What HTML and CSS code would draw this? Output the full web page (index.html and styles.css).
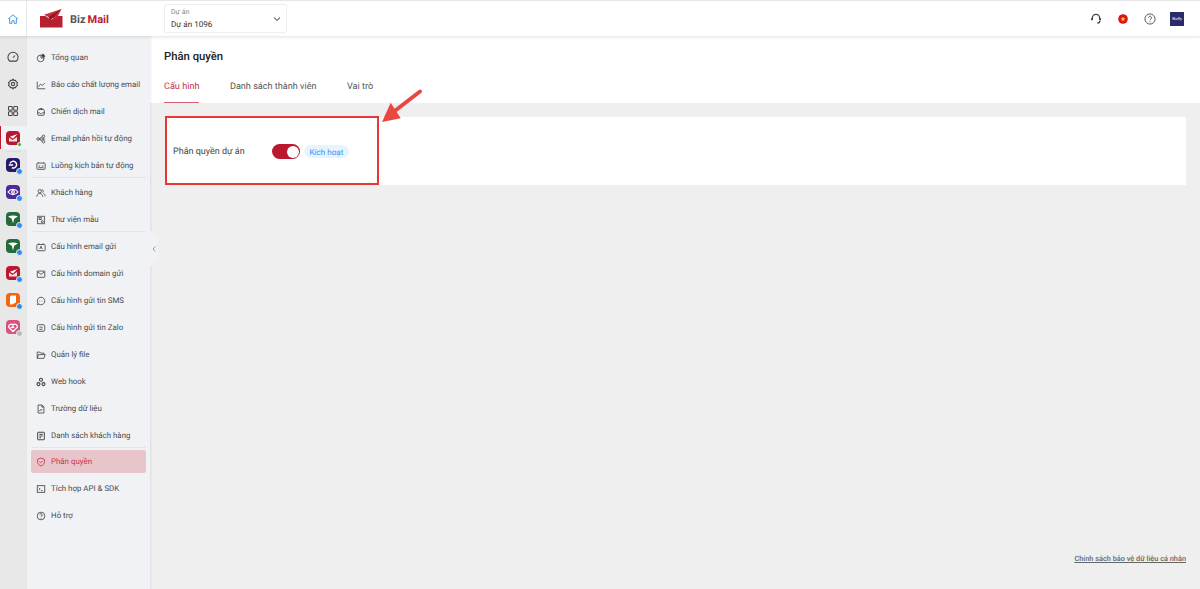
FILE: index.html
```html
<!DOCTYPE html>
<html lang="en">
<head>
  <meta charset="UTF-8">
  <meta name="viewport" content="width=device-width, initial-scale=1.0">
  <title>Phân quyền</title>
  <link rel="stylesheet" href="styles.css">
</head>
<body>

<!-- Top bar -->
<header class="topbar">
  <div class="home-cell">
    <svg class="ico-sm" viewBox="0 0 16 16" fill="none" stroke="#3f9bf0" stroke-width="1.300"><path d="M1.500 8 8 2.500 14.500 8M3.500 6.800v7h3v-3.500h3v3.500h3v-7"/></svg>
  </div>
  <div class="logo">
    <svg class="logo-mark" viewBox="0 0 23 19">
      <path d="M0 7h5.500l5.500 4 6-4h5.500v11.500H0z" fill="#b8202f"/>
      <path d="M21.500 0 4 5.800l4.500 2.300 2 3.200 1.800-2.300 3.700 1.700z" fill="#c92c3a"/>
      <path d="M21.500 0 8.500 8.100l2 3.200z" fill="#8e1622"/>
    </svg>
    <span class="logo-biz">Biz</span><span class="logo-mail">Mail</span>
  </div>
  <div class="project-select">
    <div class="project-text">
      <div class="project-label">Dự án</div>
      <div class="project-value">Dự án 1096</div>
    </div>
    <svg class="chevron" viewBox="0 0 10 10" fill="none" stroke="#777" stroke-width="1.100"><path d="M2 3.500 5 6.500 8 3.500"/></svg>
  </div>
  <div class="top-actions">
    <svg class="ico" viewBox="0 0 16 16" fill="none" stroke="#444" stroke-width="1.500"><path d="M3.800 9V7a4.200 4.200 0 0 1 8.400 0v2"/><path d="M3 7v2.500M13 7v2.500M12.500 10c0 1.800-1.200 2.700-3 2.800"/></svg>
    <svg class="ico" viewBox="0 0 16 16"><circle cx="8" cy="8" r="5.500" fill="#e0101f"/><path d="m8 5.200.8 2h2l-1.600 1.300.6 2L8 9.300l-1.800 1.200.6-2-1.600-1.300h2z" fill="#fbd914"/></svg>
    <svg class="ico" viewBox="0 0 16 16" fill="none" stroke="#555" stroke-width="1.100"><circle cx="8" cy="8" r="5.800"/><path d="M6.300 6.500a1.700 1.700 0 1 1 2.600 1.500c-.6.400-.9.700-.9 1.400M8 10.600v1.100"/></svg>
    <div class="avatar">Bizfly</div>
  </div>
</header>

<div class="layout">
  <!-- App rail -->
  <nav class="rail">
    <div class="rail-item">
      <svg class="ico-sm" viewBox="0 0 16 16" fill="none" stroke="#444" stroke-width="1.400"><path d="M3.500 13.500a6.800 6.800 0 1 1 9 0z"/><path d="M8 9l2.500-3"/></svg>
    </div>
    <div class="rail-item">
      <svg class="ico-sm" viewBox="0 0 16 16" fill="none" stroke="#444" stroke-width="1.400"><path d="M8 1.500l1.300 1.700 2.200-.2.600 2 1.900 1.100-.8 1.900.8 1.900-1.900 1.100-.6 2-2.200-.2L8 14.500l-1.300-1.700-2.200.2-.6-2-1.900-1.100.8-1.900-.8-1.900 1.900-1.100.6-2 2.200.2z"/><circle cx="8" cy="8" r="2.200"/></svg>
    </div>
    <div class="rail-item">
      <svg class="ico-sm" viewBox="0 0 16 16" fill="none" stroke="#444" stroke-width="1.400"><rect x="2" y="2" width="5" height="5" rx="1"/><rect x="9" y="2" width="5" height="5" rx="1"/><rect x="2" y="9" width="5" height="5" rx="1"/><rect x="9" y="9" width="5" height="5" rx="1"/></svg>
    </div>
    <div class="rail-item rail-active">
      <span class="app-icon app-red">
        <svg viewBox="0 0 14 14"><path d="M3 6.500 6.500 9 11 6v4.500H3z" fill="#f6dfe2"/><path d="M11.500 3 4 5.800l3 1.600z" fill="#fff"/></svg>
        <i class="dot dot-green"></i>
      </span>
    </div>
    <div class="rail-sep"></div>
    <div class="rail-item">
      <span class="app-icon app-navy">
        <svg viewBox="0 0 14 14" fill="none" stroke="#fff" stroke-width="1.500"><path d="M4 5.500a3.400 3.400 0 1 1 1.800 4.300M2.800 7h4.400"/></svg>
        <i class="dot"></i>
      </span>
    </div>
    <div class="rail-item">
      <span class="app-icon app-purple">
        <svg viewBox="0 0 14 14" fill="none" stroke="#fff" stroke-width="1.200"><path d="M2 7c2.500-3.500 7.500-3.500 10 0-2.500 3.500-7.500 3.500-10 0z"/><circle cx="7" cy="7" r="1.300"/></svg>
        <i class="dot"></i>
      </span>
    </div>
    <div class="rail-item">
      <span class="app-icon app-green">
        <svg viewBox="0 0 14 14"><path d="M2 4.500c3-1.500 7-1.500 10 0L8.200 6.800 7 11.500 5.800 6.800z" fill="#fff"/></svg>
        <i class="dot"></i>
      </span>
    </div>
    <div class="rail-item">
      <span class="app-icon app-green">
        <svg viewBox="0 0 14 14"><path d="M2 4.500c3-1.500 7-1.500 10 0L8.200 6.800 7 11.500 5.800 6.800z" fill="#fff"/></svg>
        <i class="dot"></i>
      </span>
    </div>
    <div class="rail-item">
      <span class="app-icon app-red">
        <svg viewBox="0 0 14 14"><path d="M3 6.500 6.500 9 11 6v4.500H3z" fill="#f6dfe2"/><path d="M11.500 3 4 5.800l3 1.600z" fill="#fff"/></svg>
        <i class="dot"></i>
      </span>
    </div>
    <div class="rail-item">
      <span class="app-icon app-orange">
        <svg viewBox="0 0 14 14"><path d="M5 2.500h5v7L6 11.500H4V4z" fill="#fff"/></svg>
        <i class="dot"></i>
      </span>
    </div>
    <div class="rail-item">
      <span class="app-icon app-pink">
        <svg viewBox="0 0 14 14" fill="none" stroke="#fff" stroke-width="1.300"><path d="M7 11.500 2.800 7.500a2.500 2.500 0 0 1 4.200-2.500 2.500 2.500 0 0 1 4.200 2.500z"/><path d="M4.500 7.500h1.500l1-1 1 1.500"/></svg>
        <i class="dot dot-grey"></i>
      </span>
    </div>
  </nav>

  <!-- Menu -->
  <aside class="sidebar">
    <a class="menu-item">
      <svg class="mi" viewBox="0 0 12 12" fill="none" stroke="#444"><circle cx="5.500" cy="6.500" r="4"/><path d="M6 2.500V6h4" /><path d="M7.500 1.500a3 3 0 0 1 3 3h-3z" fill="#444"/></svg>
      Tổng quan
    </a>
    <a class="menu-item">
      <svg class="mi" viewBox="0 0 12 12" fill="none" stroke="#444"><path d="M1.500 2v8.500h9.500M3 8l2.500-3 2 1.500L10.500 4"/></svg>
      Báo cáo chất lượng email
    </a>
    <a class="menu-item">
      <svg class="mi" viewBox="0 0 12 12" fill="none" stroke="#444"><rect x="2" y="3" width="8" height="7" rx="1.500"/><path d="M2 7h2.500l1 1h1l1-1H10M3.500 3 4.500 1.800h3L8.500 3"/></svg>
      Chiến dịch mail
    </a>
    <a class="menu-item">
      <svg class="mi" viewBox="0 0 12 12" fill="none" stroke="#444"><circle cx="2.500" cy="6" r="1.500"/><circle cx="9" cy="2.800" r="1.500"/><circle cx="9" cy="9.200" r="1.500"/><circle cx="9" cy="6" r="1"/><path d="M4 5.500 7.500 3.300M4 6.500l3.500 2.200M4 6h4"/></svg>
      Email phản hồi tự động
    </a>
    <a class="menu-item">
      <svg class="mi" viewBox="0 0 12 12" fill="none" stroke="#444"><rect x="1" y="2.500" width="10" height="7.500" rx="1"/><path d="M3 2.500v-1M9 2.500v-1M3 6h2M7 6h2M3 8h6"/></svg>
      Luồng kịch bản tự động
    </a>
    <div class="menu-sep"></div>
    <a class="menu-item">
      <svg class="mi" viewBox="0 0 12 12" fill="none" stroke="#444"><circle cx="4.500" cy="3.800" r="2"/><path d="M1 10.500c0-2.500 1.500-4 3.500-4s3.500 1.500 3.500 4M7 2a2 2 0 0 1 1 3.500M9 6.500c1.300.6 2 2 2 3.500"/></svg>
      Khách hàng
    </a>
    <a class="menu-item">
      <svg class="mi" viewBox="0 0 12 12" fill="none" stroke="#444"><rect x="2" y="1.500" width="8" height="9" /><rect x="3.800" y="3.200" width="2.500" height="2.200"/><circle cx="7.500" cy="8" r="1.200"/></svg>
      Thư viện mẫu
    </a>
    <div class="menu-sep"></div>
    <a class="menu-item">
      <svg class="mi" viewBox="0 0 12 12" fill="none" stroke="#444"><rect x="1" y="3" width="10" height="7.500" rx="1"/><path d="M3.500 3V1.500M8.500 3V1.500M4.500 8.500 6 5l1.500 3.500"/></svg>
      Cấu hình email gửi
    </a>
    <a class="menu-item">
      <svg class="mi" viewBox="0 0 12 12" fill="none" stroke="#444"><rect x="1.500" y="2.500" width="9" height="7.500" rx=".5"/><path d="M1.500 3 6 6.500 10.500 3"/></svg>
      Cấu hình domain gửi
    </a>
    <a class="menu-item">
      <svg class="mi" viewBox="0 0 12 12" fill="none" stroke="#444"><path d="M6 1.500a4.500 4.500 0 1 1-2.500 8.200L1.700 10.500l.6-2A4.500 4.500 0 0 1 6 1.500z"/><path d="M4 6h.5M5.800 6h.5M7.600 6h.5"/></svg>
      Cấu hình gửi tin SMS
    </a>
    <a class="menu-item">
      <svg class="mi" viewBox="0 0 12 12" fill="none" stroke="#444"><rect x="1.500" y="2" width="9" height="8" rx="2"/><path d="M4 5h4M4 7.500h4"/></svg>
      Cấu hình gửi tin Zalo
    </a>
    <a class="menu-item">
      <svg class="mi" viewBox="0 0 12 12" fill="none" stroke="#444"><path d="M1.500 10V2.500h3l1 1.200h4V5.500M1.500 10h8L11 5.500H3z"/></svg>
      Quản lý file
    </a>
    <a class="menu-item">
      <svg class="mi" viewBox="0 0 12 12" fill="none" stroke="#444" stroke-width="1.300"><circle cx="6" cy="3.200" r="1.800"/><circle cx="3" cy="8.500" r="1.800"/><circle cx="9" cy="8.500" r="1.800"/></svg>
      Web hook
    </a>
    <a class="menu-item">
      <svg class="mi" viewBox="0 0 12 12" fill="none" stroke="#444"><path d="M2.500 1.200h4.700l2.300 2.300v7.300h-7z"/><path d="M7 1.200v2.500h2.500M4 8.500l1.200-1.500 1 .8L7.500 6"/></svg>
      Trường dữ liệu
    </a>
    <a class="menu-item">
      <svg class="mi" viewBox="0 0 12 12" fill="none" stroke="#444" stroke-width="1.200"><rect x="2" y="1.500" width="8" height="9" rx=".5"/><path d="M4 4h4M4 6h4M4 8h2"/></svg>
      Danh sách khách hàng
    </a>
    <div class="menu-sep"></div>
    <a class="menu-item menu-active">
      <svg class="mi" viewBox="0 0 12 12" fill="none" stroke="#c8324a"><path d="M6 1.200 10 2.700V6c0 2.500-2 4-4 4.800C4 10 2 8.500 2 6V2.700z"/><path d="M4.200 5.800 5.500 7l2.300-2.300"/></svg>
      Phân quyền
    </a>
    <a class="menu-item">
      <svg class="mi" viewBox="0 0 12 12" fill="none" stroke="#444"><rect x="1.500" y="2" width="9" height="8"/><path d="M3.500 4.500 5 6 3.500 7.500M6 8h2"/></svg>
      Tích hợp API &amp; SDK
    </a>
    <a class="menu-item">
      <svg class="mi" viewBox="0 0 12 12" fill="none" stroke="#444"><circle cx="6" cy="6" r="4.600"/><path d="M4.500 4.800A1.500 1.500 0 1 1 6.800 6.100c-.5.300-.8.600-.8 1.100M6 8.300v.8"/></svg>
      Hỗ trợ
    </a>
    <div class="collapse-tab">
      <svg viewBox="0 0 6 8" fill="none" stroke="#999"><path d="M4.500 1.500 2 4l2.500 2.500"/></svg>
    </div>
  </aside>

  <!-- Content -->
  <main class="main">
    <div class="page-head">
      <h1 class="page-title">Phân quyền</h1>
      <div class="tabs">
        <a class="tab tab-active">Cấu hình</a>
        <a class="tab">Danh sách thành viên</a>
        <a class="tab">Vai trò</a>
      </div>
    </div>
    <div class="page-body">
      <section class="card">
        <span class="setting-label">Phân quyền dự án</span>
        <span class="toggle"><i class="knob"></i></span>
        <span class="badge">Kích hoạt</span>
      </section>
      <a class="policy-link">Chính sách bảo vệ dữ liệu cá nhân</a>
    </div>

    <!-- Annotation drawn over the screenshot -->
    <div class="mark-box"></div>
    <svg class="mark-arrow" viewBox="0 0 44 40">
      <path d="M40 5.500 16 24" stroke="#e8483f" stroke-width="4" stroke-linecap="round" fill="none"/>
      <path d="M2 36 10.700 16.700 20.700 32.300z" fill="#e8483f"/>
    </svg>
  </main>
</div>

</body>
</html>
```

FILE: styles.css
```css
* {
  box-sizing: border-box;
}

html, body {
  height: 100%;
}

body {
  margin: 0;
  font-family: Roboto, "Noto Sans", sans-serif;
  font-size: 9px;
  color: #444;
  background-color: #efefef;
  overflow: hidden;
  text-rendering: geometricPrecision;
}

.ico {
  width: 14px;
  height: 14px;
  display: block;
}

.ico-sm {
  width: 12px;
  height: 12px;
  display: block;
}

/* Top bar */
.topbar {
  height: 36px;
  display: flex;
  align-items: center;
  background-color: #fff;
  border-top: 1px solid #e6e6e6;
  box-shadow: 0 1px 3px rgba(0, 0, 0, 0.12);
  position: relative;
  z-index: 2;
}

.home-cell {
  width: 27px;
  height: 100%;
  display: flex;
  align-items: center;
  justify-content: center;
  border-right: 1px solid #e8e8e8;
}

.logo {
  width: 137px;
  padding-left: 13px;
  display: flex;
  align-items: center;
}

.logo-mark {
  width: 23px;
  height: 19px;
  margin-right: 7px;
}

.logo-biz, .logo-mail {
  font-size: 11px;
  line-height: 13px;
  padding-top: 2px;
  font-weight: 700;
}

.logo-biz {
  color: #555;
  margin-right: 2px;
}

.logo-mail {
  color: #b8202f;
}

.project-select {
  width: 123px;
  height: 29px;
  padding: 0 4px 0 6px;
  display: flex;
  align-items: center;
  justify-content: space-between;
  border: 1px solid #efefef;
  border-radius: 2px;
}

.project-label {
  font-size: 7px;
  color: #888;
  line-height: 10px;
}

.project-value {
  font-size: 8.1px;
  color: #333;
  line-height: 14px;
}

.chevron {
  width: 10px;
  height: 10px;
}

.top-actions {
  margin-left: auto;
  padding-right: 16px;
  display: flex;
  align-items: center;
  gap: 13px;
}

.avatar {
  width: 14px;
  height: 14px;
  background-color: #2b2a6b;
  color: #fff;
  font-size: 4px;
  line-height: 14px;
  text-align: center;
  overflow: hidden;
}

/* Layout */
.layout {
  display: flex;
  height: calc(100% - 36px);
  position: relative;
}

/* App rail */
.rail {
  width: 27px;
  flex-shrink: 0;
  padding-top: 7px;
  background-color: #e8e8e8;
}

.rail-item {
  height: 27px;
  padding-right: 1px;
  display: flex;
  align-items: center;
  justify-content: center;
}

.rail-active {
  height: 23px;
  margin: 2px 0;
  background-color: #f0f2f6;
  border-left: 1.500px solid #c4172c;
  padding-right: 1.500px;
}

.rail-sep {
  height: 1px;
  margin: 0 6px -1px;
  background-color: #dcdcdc;
}

.app-icon {
  width: 14px;
  height: 14px;
  border-radius: 4px;
  position: relative;
  display: block;
}

.app-icon svg {
  display: block;
  width: 14px;
  height: 14px;
}

.app-red {
  background-color: #b9182e;
}

.app-navy {
  background-color: #241a66;
}

.app-purple {
  background-color: #4d2a96;
}

.app-green {
  background-color: #246a3a;
}

.app-orange {
  background-color: #f4650f;
}

.app-pink {
  background-color: #d9527f;
}

.dot {
  position: absolute;
  right: -3px;
  bottom: -3px;
  width: 7px;
  height: 7px;
  border-radius: 50%;
  background-color: #2f8ff0;
  border: 1px solid #f2f2f2;
}

.dot-green {
  right: -2px;
  bottom: -2px;
  width: 5px;
  height: 5px;
  background-color: #3db54a;
}

.dot-grey {
  background-color: #bbb;
}

/* Menu */
.sidebar {
  width: 123px;
  flex-shrink: 0;
  padding: 8px 4px 0;
  background-color: #f0f2f6;
  box-shadow: 1px 0 2px rgba(0, 0, 0, 0.08);
  position: relative;
  z-index: 1;
}

.menu-item {
  height: 27px;
  padding-left: 5px;
  display: flex;
  align-items: center;
  gap: 5px;
  color: #4a4a4a;
  font-size: 7.9px;
  white-space: nowrap;
}

.mi {
  width: 10px;
  height: 10px;
  flex-shrink: 0;
}

.menu-sep {
  height: 1px;
  margin: -2px 0 1px;
  background-color: #e2e4e8;
}

.menu-active {
  height: 23px;
  margin: 2px 0;
  color: #c8324a;
  background-color: #e8c5cb;
  border-radius: 2px;
}

.collapse-tab {
  position: absolute;
  top: 195px;
  right: -8px;
  width: 8px;
  height: 36px;
  display: flex;
  align-items: center;
  justify-content: center;
  background-color: #f0f2f6;
  clip-path: polygon(0 0, 100% 20%, 100% 80%, 0 100%);
}

.collapse-tab svg {
  width: 6px;
  height: 8px;
}

/* Content */
.main {
  flex: 1;
  display: flex;
  flex-direction: column;
  position: relative;
}

.page-head {
  height: 67px;
  padding: 0 14px;
  background-color: #fff;
}

.page-title {
  margin: 0;
  padding-top: 13px;
  font-size: 11.3px;
  line-height: 16px;
  font-weight: 500;
  color: #222;
}

.tabs {
  margin-top: 12px;
  display: flex;
  gap: 30.5px;
}

.tab {
  height: 26px;
  padding-top: 4px;
  font-size: 9.1px;
  line-height: 12px;
  color: #555;
}

.tab-active {
  color: #c8324a;
  border-bottom: 1.500px solid #d9606f;
}

.page-body {
  flex: 1;
  padding: 14px 14px 0 15px;
  display: flex;
  flex-direction: column;
}

.card {
  height: 68px;
  padding-left: 8px;
  display: flex;
  align-items: center;
  background-color: #fff;
}

.setting-label {
  width: 99px;
  padding-top: 2px;
  font-size: 9px;
  color: #444;
}

.toggle {
  width: 28px;
  height: 15px;
  margin-top: 1px;
  margin-right: 4px;
  border-radius: 8px;
  background-color: #b9182e;
  position: relative;
}

.knob {
  position: absolute;
  top: 1.500px;
  right: 1.500px;
  width: 12px;
  height: 12px;
  border-radius: 50%;
  background-color: #fff;
}

.badge {
  height: 13px;
  margin-top: 1px;
  padding: 0 5.500px;
  border-radius: 7px;
  background-color: #e6f4ff;
  color: #3a93f0;
  font-size: 8.1px;
  line-height: 14px;
}

.policy-link {
  margin-top: auto;
  margin-bottom: 26px;
  align-self: flex-end;
  font-size: 7.35px;
  font-weight: 500;
  color: #666;
  text-decoration: underline;
}

/* Annotation */
.mark-box {
  position: absolute;
  left: 15px;
  top: 80px;
  width: 214px;
  height: 69px;
  border: 2px solid #e53935;
}

.mark-arrow {
  position: absolute;
  left: 230px;
  top: 50px;
  width: 44px;
  height: 40px;
}
```
